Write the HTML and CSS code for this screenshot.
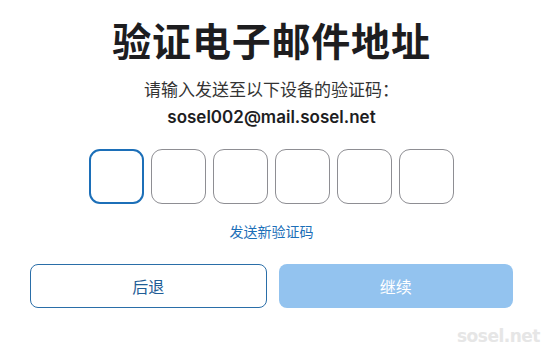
FILE: index.html
```html
<!DOCTYPE html>
<html lang="zh-CN">
<head>
  <meta charset="UTF-8">
  <meta name="viewport" content="width=device-width, initial-scale=1.0">
  <title>验证电子邮件地址</title>
  <link rel="stylesheet" href="styles.css">
</head>
<body>
  <div class="verify-container">
    <h1 class="verify-title">验证电子邮件地址</h1>
    <p class="verify-hint">请输入发送至以下设备的验证码：</p>
    <p class="verify-email">sosel002@mail.sosel.net</p>

    <div class="code-inputs">
      <input class="code-box active" maxlength="1">
      <input class="code-box" maxlength="1">
      <input class="code-box" maxlength="1">
      <input class="code-box" maxlength="1">
      <input class="code-box" maxlength="1">
      <input class="code-box" maxlength="1">
    </div>

    <a class="resend-link" href="#">发送新验证码</a>

    <div class="actions">
      <button class="btn btn-back">后退</button>
      <button class="btn btn-continue" disabled>继续</button>
    </div>
  </div>

  <div class="watermark">sosel.net</div>
</body>
</html>
```

FILE: styles.css
```css
* {
  box-sizing: border-box;
  margin: 0;
  padding: 0;
  font-family: "Inter", "Noto Sans CJK SC", sans-serif;
}

body {
  background-color: #ffffff;
  width: 550px;
  height: 355px;
  overflow: hidden;
  position: relative;
}

.verify-container {
  width: 483px;
  margin-left: 30px;
  display: flex;
  flex-direction: column;
  align-items: center;
  padding-top: 16px;
}

.verify-title {
  font-size: 39px;
  font-weight: 700;
  color: #1d1d1f;
  line-height: 52px;
  letter-spacing: 0.8px;
}

.verify-hint {
  margin-top: 10px;
  font-size: 17px;
  color: #333333;
  line-height: 24px;
}

.verify-email {
  margin-top: 3px;
  font-size: 17px;
  font-weight: 600;
  color: #1d1d1f;
  line-height: 24px;
}

.code-inputs {
  display: flex;
  gap: 7px;
  margin-top: 20px;
}

.code-box {
  width: 55px;
  height: 55px;
  border: 1px solid #8e8e93;
  border-radius: 11px;
  background-color: #ffffff;
  outline: none;
}

.code-box.active {
  border: 2px solid #1c6fb8;
}

.resend-link {
  margin-top: 18px;
  font-size: 14px;
  line-height: 20px;
  color: #1c6fb8;
  text-decoration: none;
}

.actions {
  display: flex;
  gap: 12px;
  width: 100%;
  margin-top: 22px;
}

.btn {
  flex: 1;
  height: 44px;
  border-radius: 8px;
  font-size: 16px;
  font-family: "Inter", "Noto Sans CJK SC", sans-serif;
}

.btn-back {
  background-color: #ffffff;
  border: 1px solid #2a6ea8;
  color: #1f5d96;
}

.btn-continue {
  background-color: #93c3ef;
  border: none;
  color: #ffffff;
}

.watermark {
  position: absolute;
  right: 10px;
  bottom: 9px;
  font-size: 17px;
  font-weight: 700;
  color: #e6e6e6;
  font-family: "DejaVu Sans", sans-serif;
  letter-spacing: -0.5px;
}
```
